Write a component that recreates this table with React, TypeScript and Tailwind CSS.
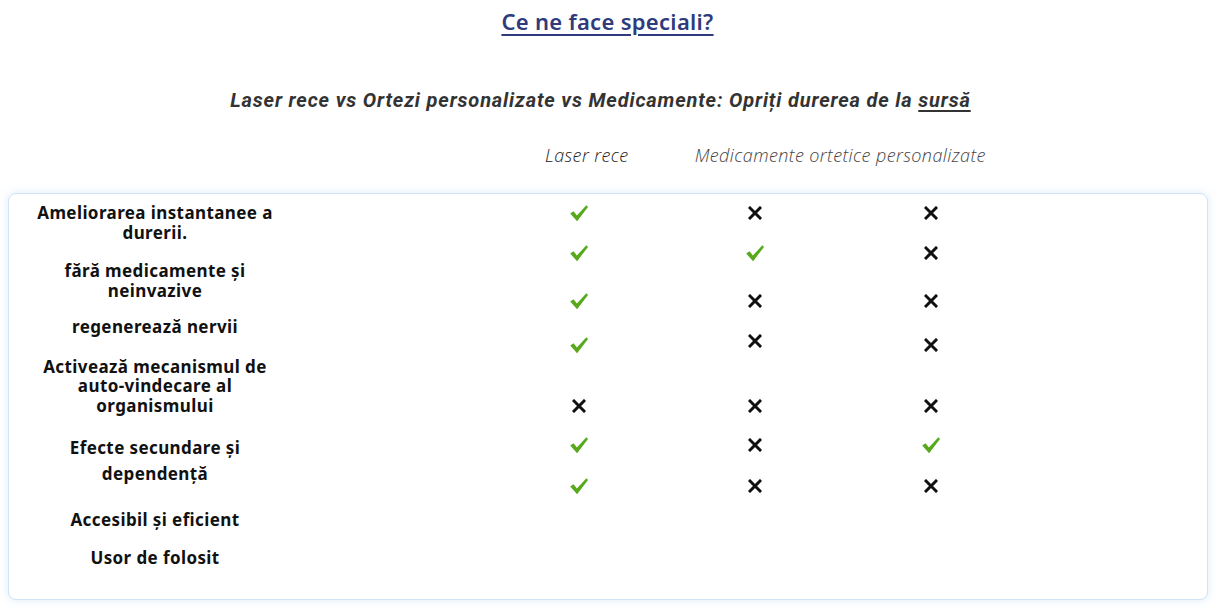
const labels: { lines: string[]; mt: string }[] = [
  { lines: ['Ameliorarea instantanee a', 'durerii.'], mt: 'mt-[9px]' },
  { lines: ['fără medicamente și', 'neinvazive'], mt: 'mt-[19px]' },
  { lines: ['regenerează nervii'], mt: 'mt-[17px]' },
  { lines: ['Activează mecanismul de', 'auto-vindecare al', 'organismului'], mt: 'mt-[20px]' },
  { lines: ['Efecte secundare și'], mt: 'mt-[23px]' },
  { lines: ['dependență'], mt: 'mt-[6px]' },
  { lines: ['Accesibil și eficient'], mt: 'mt-[27px]' },
  { lines: ['Usor de folosit'], mt: 'mt-[18px]' },
];

type Mark = 'y' | 'n';

const rows: { marks: Mark[]; mt: string; offsets?: string[] }[] = [
  { marks: ['y', 'n', 'n'], mt: 'mt-[9px]' },
  { marks: ['y', 'y', 'n'], mt: 'mt-[20px]' },
  { marks: ['y', 'n', 'n'], mt: 'mt-[28px]' },
  { marks: ['y', 'n', 'n'], mt: 'mt-[22px]', offsets: ['translate-y-[2px]', '-translate-y-[2px]', 'translate-y-[2px]'] },
  { marks: ['n', 'n', 'n'], mt: 'mt-[43px]' },
  { marks: ['y', 'n', 'y'], mt: 'mt-[19px]' },
  { marks: ['y', 'n', 'n'], mt: 'mt-[21px]' },
];

function Check() {
  return (
    <svg width="20" height="18" viewBox="0 0 20 18">
      <path d="M1.2 9.6 L4.6 7.3 L7.9 11.6 L17.4 1.2 L19 2.9 L8.1 17.2 Z" fill="#58a81c" />
    </svg>
  );
}

function Cross() {
  return (
    <svg width="14" height="14" viewBox="0 0 14 14">
      <path d="M2 2 L12 12 M12 2 L2 12" stroke="#111" strokeWidth="3" strokeLinecap="square" />
    </svg>
  );
}

export default function App() {
  return (
    <div className="w-[1219px] h-[608px] bg-white font-['Noto_Sans',sans-serif] text-[#111] overflow-hidden">
      {/* Title */}
      <div className="pt-[6px] flex justify-center">
        <h2 className="text-[22px] leading-[30px] font-semibold text-[#2f3b7c] underline underline-offset-[4px] decoration-[2px] tracking-[0.3px] -translate-x-[2px]">
          Ce ne face speciali?
        </h2>
      </div>

      {/* Subtitle */}
      <div className="mt-[51px] flex justify-center">
        <p className="font-['Roboto',sans-serif] italic font-bold text-[20px] leading-[26px] text-[#333] tracking-[0.83px] -translate-x-[9px]">
          Laser rece vs Ortezi personalizate vs Medicamente: Opriți durerea de la{' '}
          <span className="underline underline-offset-[3px]">sursă</span>
        </p>
      </div>

      {/* Column headers */}
      <div className="mt-[30px] flex pl-[545px] gap-[66px] font-['Open_Sans',sans-serif] italic font-light text-[18px] leading-[24px] text-[#222] tracking-[0.4px]">
        <span>Laser rece</span>
        <span className="text-[#444]">Medicamente ortetice personalizate</span>
      </div>

      {/* Comparison card */}
      <div className="ml-[8px] mr-[11px] mt-[26px] h-[407px] rounded-[8px] border border-[#cfe2f6] bg-white shadow-[0_0_10px_rgba(80,150,230,0.18)] flex">
        <div className="w-[292px] flex flex-col items-center text-center font-bold text-[17px] leading-[19.5px] tracking-[0.4px]">
          {labels.map((l, i) => (
            <div key={i} className={l.mt}>
              {l.lines.map((line, j) => (
                <div key={j}>{line}</div>
              ))}
            </div>
          ))}
        </div>

        <div className="ml-[190px] flex flex-col">
          {rows.map((r, i) => (
            <div key={i} className={`${r.mt} flex h-[20px]`}>
              {r.marks.map((m, j) => (
                <div
                  key={j}
                  className={`w-[176px] flex items-center justify-center ${r.offsets ? r.offsets[j] : ''}`}
                >
                  {m === 'y' ? <Check /> : <Cross />}
                </div>
              ))}
            </div>
          ))}
        </div>
      </div>
    </div>
  );
}
